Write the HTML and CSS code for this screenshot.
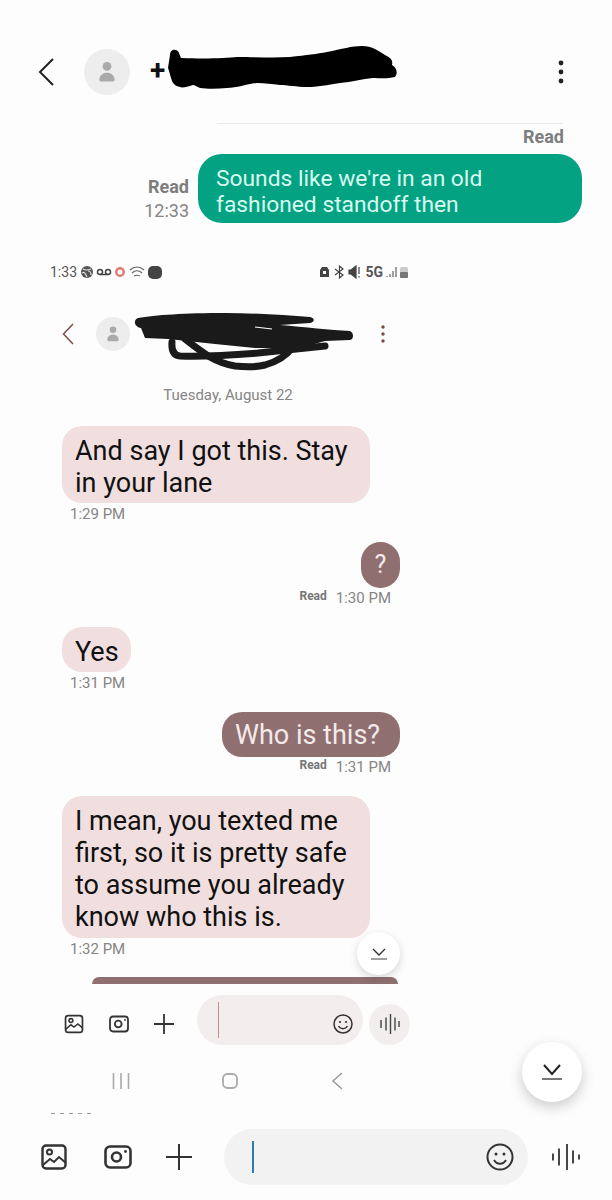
FILE: index.html
```html
<!DOCTYPE html>
<html lang="en">
<head>
    <meta charset="UTF-8">
    <meta name="viewport" content="width=device-width, initial-scale=1.0">
    <title>Messages</title>
    <link rel="stylesheet" href="styles.css">
</head>
<body>
    <div class="page">
        <header class="top-bar">
            <svg class="back-icon" width="16" height="28" viewBox="0 0 16 28"><path d="M15 1 2 14l13 13" fill="none" stroke="#222" stroke-width="2"/></svg>
            <div class="avatar">
                <svg width="16" height="22" viewBox="0 0 20 26"><circle cx="10" cy="6" r="5.500" fill="#aaa"/><path d="M3 25c-3 0-3-3-2-5 1-4 5-6 9-6s8 2 9 6c1 2 1 5-2 5z" fill="#aaa"/></svg>
            </div>
            <span class="contact-plus">+</span>
            <svg class="redact redact-top" width="232" height="45" viewBox="0 0 232 45"><path d="M3 10C3 4 10 3 12 8L14 13C40 14 60 13 70 12 90 12 105 13 123 12 140 10 150 9 160 7 175 4 185 1 195 1 205 1 212 6 218 10 224 13 226 15 225 20 230 23 231 28 228 32 220 34 212 33 206 33 195 34 185 37 173 38 160 40 150 42 140 42 130 42 120 40 113 40 105 39 98 38 90 38 80 39 70 43 60 43 50 44 40 44 33 43 30 42 28 40 26 40 20 42 15 43 13 42 8 41 6 38 5 36 3 30 2 25 1 23z" fill="#000"/></svg>
            <svg class="menu-dots" width="6" height="24" viewBox="0 0 6 24"><circle cx="3" cy="3" r="2.400"/><circle cx="3" cy="12" r="2.400"/><circle cx="3" cy="21" r="2.400"/></svg>
        </header>

        <div class="outer-thread">
            <div class="divider"></div>
            <div class="read-top">Read</div>
            <div class="outer-row">
                <div class="outer-meta"><b>Read</b><span>12:33</span></div>
                <div class="bubble-green">Sounds like we're in an old<br>fashioned standoff then</div>
            </div>
        </div>

        <section class="inner-screen">
            <div class="status-bar">
                <div class="status-left">
                    <span>1:33</span>
                    <svg width="66" height="14" viewBox="0 0 66 14">
                        <circle cx="7" cy="7" r="6" fill="#555"/><path d="M3 4c3 2 5 1 8 0M2 8c3-2 4 2 5 4M8 6c2 0 3 2 3 4" fill="none" stroke="#ddd" stroke-width="1.200"/>
                        <g fill="none" stroke="#444" stroke-width="1.500"><circle cx="20" cy="7" r="2.500"/><circle cx="28" cy="7" r="2.500"/><path d="M20 9.500h8"/></g>
                        <circle cx="40" cy="7" r="3.800" fill="none" stroke="#dc7a70" stroke-width="2.400"/>
                        <path d="M50 5c4-4 10-4 14 0M52 8c3-3 7-3 10 0M54 11c2-1 4-1 6 0" fill="none" stroke="#666" stroke-width="1.200"/>
                    </svg>
                    <span class="status-pill"></span>
                </div>
                <div class="status-right">
                    <svg width="44" height="14" viewBox="0 0 44 14">
                        <path d="M2 12V5l2-3h5l2 3v7z" fill="#444"/><rect x="5" y="6" width="3" height="3" fill="#fff"/>
                        <path d="M17 4l8 6-3.500 3V1L25 4l-8 6" fill="none" stroke="#444" stroke-width="1.200"/>
                        <path d="M31 5h2l5-4v12l-5-4h-2zM41 2v7M41 11v1.500" fill="#444" stroke="#444" stroke-width="1.200"/>
                    </svg>
                    <b>5G</b>
                    <svg width="22" height="14" viewBox="0 0 22 14">
                        <path d="M1 12v-1M4 12V9M7 12V6M10 12V2" stroke="#777" stroke-width="1.400"/>
                        <rect x="14" y="2" width="8" height="11" rx="1.500" fill="#ccc"/><rect x="14" y="7" width="8" height="6" rx="1" fill="#777"/>
                    </svg>
                </div>
            </div>

            <div class="inner-header">
                <svg class="inner-back" width="12" height="22" viewBox="0 0 12 22"><path d="M11 1 1.500 11l9.500 10" fill="none" stroke="#7b4a46" stroke-width="1.500"/></svg>
                <div class="inner-avatar">
                    <svg width="12" height="16" viewBox="0 0 20 26"><circle cx="10" cy="6" r="5.500" fill="#aaa"/><path d="M3 25c-3 0-3-3-2-5 1-4 5-6 9-6s8 2 9 6c1 2 1 5-2 5z" fill="#aaa"/></svg>
                </div>
                <svg class="redact redact-inner" width="240" height="70" viewBox="0 0 240 70">
                    <path d="M13 12C30 9 60 7 100 7 130 7 160 9 185 11 190 12 190 16 185 17L155 19C180 21 205 24 225 25 229 27 229 33 225 34L200 35C190 38 180 41 167 42L130 42 90 38 43 33 20 32 16 22C9 21 8 14 13 12z" fill="#1a1a1a"/>
                    <path d="M47 36q-1 13 8 14 28 1 78-3l67-7" fill="none" stroke="#1a1a1a" stroke-width="7" stroke-linecap="round"/>
                    <path d="M60 33q10 8 23 17 14 8 27 10 18 2 30-1 18-5 27-17" fill="none" stroke="#1a1a1a" stroke-width="7" stroke-linecap="round"/>
                    <path d="M130 21l17 2" stroke="#fff" stroke-width="1.200"/>
                </svg>
                <svg class="inner-dots" width="4" height="18" viewBox="0 0 4 18"><circle cx="2" cy="2" r="1.700" fill="#7b4a46"/><circle cx="2" cy="9" r="1.700" fill="#7b4a46"/><circle cx="2" cy="16" r="1.700" fill="#7b4a46"/></svg>
            </div>

            <div class="date-label">Tuesday, August 22</div>

            <div class="msg-in msg-first">And say I got this. Stay<br>in your lane</div>
            <div class="time-in">1:29 PM</div>

            <div class="msg-out msg-question">?</div>
            <div class="meta-out"><b>Read</b><span>1:30 PM</span></div>

            <div class="msg-in msg-yes">Yes</div>
            <div class="time-in">1:31 PM</div>

            <div class="msg-out msg-who">Who is this?</div>
            <div class="meta-out"><b>Read</b><span>1:31 PM</span></div>

            <div class="msg-in msg-long">I mean, you texted me<br>first, so it is pretty safe<br>to assume you already<br>know who this is.</div>
            <div class="time-in">1:32 PM</div>

            <div class="msg-cut"></div>

            <button class="scroll-btn scroll-inner">
                <svg width="16" height="12" viewBox="0 0 16 12"><path d="M2 1l6 6 6-6" fill="none" stroke="#333" stroke-width="1.400"/><path d="M0 11h16" stroke="#777" stroke-width="1.400"/></svg>
            </button>

            <div class="composer-inner">
                <svg width="20" height="20" viewBox="0 0 26 26" class="ic-gallery"><rect x="2" y="2" width="22" height="22" rx="3.500" fill="none" stroke="#333" stroke-width="2.200"/><circle cx="9" cy="8.500" r="2.500" fill="none" stroke="#333" stroke-width="2"/><path d="M2 20l7-6 4 3 5-4 6 5" fill="none" stroke="#333" stroke-width="2"/></svg>
                <svg width="22" height="18" viewBox="0 0 28 24" class="ic-camera"><rect x="2" y="2" width="24" height="20" rx="4" fill="none" stroke="#333" stroke-width="2.400"/><circle cx="13" cy="12" r="4.500" fill="none" stroke="#333" stroke-width="2.400"/><circle cx="22" cy="6.500" r="1.300" fill="#333"/></svg>
                <svg width="20" height="20" viewBox="0 0 20 20" class="ic-plus"><path d="M10 0v20M0 10h20" stroke="#333" stroke-width="1.800"/></svg>
                <div class="field-inner">
                    <span class="caret-inner"></span>
                    <svg class="smile-inner" width="20" height="20" viewBox="0 0 20 20"><circle cx="10" cy="10" r="9" fill="none" stroke="#333" stroke-width="1.500"/><circle cx="7" cy="8" r="1.100" fill="#333"/><circle cx="13" cy="8" r="1.100" fill="#333"/><path d="M5.500 12c2 3.500 7 3.500 9 0" fill="none" stroke="#333" stroke-width="1.500"/></svg>
                </div>
                <div class="voice-inner">
                    <svg width="20" height="20" viewBox="0 0 20 20"><path d="M1 6v8M6 3.500v13M10.500 0v20M15 3.500v13M19 7v6" stroke="#444" stroke-width="1.400"/></svg>
                </div>
            </div>

            <div class="nav-bar">
                <svg width="18" height="16" viewBox="0 0 18 16"><path d="M1.500 0v16M9 0v16M16.500 0v16" stroke="#aaa" stroke-width="1.600"/></svg>
                <svg width="16" height="16" viewBox="0 0 16 16"><rect x="1" y="1" width="14" height="14" rx="4.500" fill="none" stroke="#aaa" stroke-width="1.800"/></svg>
                <svg width="14" height="18" viewBox="0 0 14 18"><path d="M13 1 4 9l9 8" fill="none" stroke="#999" stroke-width="1.500"/></svg>
            </div>
        </section>

        <div class="cut-text"></div>

        <button class="scroll-btn scroll-outer">
            <svg width="20" height="16" viewBox="0 0 20 16"><path d="M2 1l8 9 8-9" fill="none" stroke="#222" stroke-width="2"/><path d="M0 15h20" stroke="#777" stroke-width="2"/></svg>
        </button>

        <footer class="composer">
            <svg width="26" height="26" viewBox="0 0 26 26"><rect x="1.500" y="1.500" width="23" height="23" rx="3.500" fill="none" stroke="#333" stroke-width="2.400"/><circle cx="8.500" cy="8" r="2.500" fill="none" stroke="#333" stroke-width="2"/><path d="M2 21l7-6 4 3 5-5 7 6" fill="none" stroke="#333" stroke-width="2"/></svg>
            <svg class="ic-camera-big" width="28" height="24" viewBox="0 0 28 24"><rect x="1.500" y="1.500" width="25" height="21" rx="4.500" fill="none" stroke="#333" stroke-width="2.600"/><circle cx="12.500" cy="12" r="4.500" fill="none" stroke="#333" stroke-width="2.600"/><circle cx="21.500" cy="6.500" r="1.400" fill="#333"/></svg>
            <svg class="ic-plus-big" width="26" height="26" viewBox="0 0 26 26"><path d="M13 0v26M0 13h26" stroke="#333" stroke-width="2"/></svg>
            <div class="field">
                <span class="caret"></span>
                <svg width="28" height="28" viewBox="0 0 28 28"><circle cx="14" cy="14" r="12.500" fill="none" stroke="#333" stroke-width="2"/><circle cx="10" cy="11" r="1.500" fill="#333"/><circle cx="18" cy="11" r="1.500" fill="#333"/><path d="M8 17c3 5 9 5 12 0" fill="none" stroke="#333" stroke-width="2"/></svg>
            </div>
            <svg class="ic-voice" width="28" height="26" viewBox="0 0 28 26"><path d="M1 9.500v7M7 4.500v17M15 0v26M21 6.500v13M27 10.500v5" stroke="#333" stroke-width="1.800"/></svg>
        </footer>
    </div>
</body>
</html>
```

FILE: styles.css
```css
* {
    margin: 0;
    padding: 0;
    box-sizing: border-box;
    font-family: Roboto, 'Liberation Sans', sans-serif;
}

body {
    background-color: #fdfdfd;
    color: #1a1a1a;
}

.page {
    position: relative;
    width: 612px;
    height: 1200px;
    padding-top: 49px;
    overflow: hidden;
}

/* outer conversation */
.top-bar {
    position: relative;
    display: flex;
    align-items: center;
    height: 46px;
    padding-left: 38px;
}

.avatar {
    display: flex;
    align-items: center;
    justify-content: center;
    width: 46px;
    height: 46px;
    margin-left: 30px;
    border-radius: 50%;
    background-color: #ededed;
}

.contact-plus {
    margin: 0 0 4px 20px;
    font-size: 28px;
    font-weight: 700;
    color: #111;
}

.menu-dots {
    margin-left: auto;
    margin-right: 48px;
    fill: #222;
}

.redact {
    position: absolute;
}

.redact-top {
    left: 167px;
    top: -4px;
}

.outer-thread {
    padding: 28px 30px 0 0;
}

.divider {
    width: 346px;
    height: 1px;
    margin-left: 217px;
    background-color: #ebebeb;
}

.read-top {
    margin: 1px 18px 0 0;
    text-align: right;
    font-size: 18px;
    line-height: 24px;
    font-weight: 700;
    color: #7d7d7d;
}

.outer-row {
    display: flex;
    justify-content: flex-end;
    align-items: flex-end;
    gap: 9px;
    margin-top: 5px;
}

.outer-meta {
    display: flex;
    flex-direction: column;
    align-items: flex-end;
    font-size: 18px;
    line-height: 24px;
    color: #858585;
}

.outer-meta b {
    color: #7d7d7d;
}

.bubble-green {
    width: 384px;
    height: 69px;
    padding: 12px 18px;
    border-radius: 24px;
    background-color: #02a283;
    color: #d8fbef;
    font-size: 22.800px;
    line-height: 26px;
}

/* screenshot inside the screenshot */
.inner-screen {
    position: relative;
    width: 420px;
    margin-top: 41px;
    padding-left: 62px;
}

.status-bar {
    display: flex;
    justify-content: space-between;
    align-items: center;
    height: 16px;
    width: 358px;
    margin-left: -12px;
    font-size: 14px;
    color: #555;
}

.status-left,
.status-right {
    display: flex;
    align-items: center;
    gap: 3px;
}

.status-pill {
    width: 14px;
    height: 13px;
    margin-left: -1px;
    border-radius: 5px;
    background-color: #444;
}

.status-right b {
    font-size: 14px;
    color: #555;
}

.inner-header {
    position: relative;
    display: flex;
    align-items: center;
    height: 36px;
    width: 338px;
    margin-top: 36px;
}

.inner-avatar {
    display: flex;
    align-items: center;
    justify-content: center;
    width: 34px;
    height: 34px;
    margin-left: 22px;
    border-radius: 50%;
    background-color: #ededed;
}

.redact-inner {
    left: 63px;
    top: -10px;
}

.inner-dots {
    margin-left: auto;
    margin-right: 15px;
}

.date-label {
    width: 332px;
    margin-top: 34px;
    text-align: center;
    font-size: 15px;
    line-height: 18px;
    color: #858585;
}

.msg-in,
.msg-out {
    font-size: 27px;
    line-height: 32px;
}

.msg-in {
    padding: 9px 13px 4px;
    border-radius: 20px;
    background-color: #f1dfdf;
    color: #111;
}

.msg-first {
    width: 308px;
    margin-top: 22px;
}

.msg-yes {
    width: 69px;
    height: 45px;
    margin-top: 20px;
}

.msg-long {
    width: 308px;
    height: 142px;
    margin-top: 20px;
}

.time-in {
    height: 19px;
    margin-left: 8px;
    padding-top: 4px;
    font-size: 15px;
    line-height: 15px;
    color: #858585;
}

.msg-out {
    margin-left: auto;
    margin-right: 20px;
    border-radius: 20px;
    background-color: #8f6f70;
    color: #f3eaea;
}

.msg-question {
    width: 39px;
    height: 46px;
    margin-top: 20px;
    text-align: center;
    font-size: 25px;
    line-height: 46px;
}

.msg-who {
    width: 178px;
    height: 45px;
    margin-top: 21px;
    padding-left: 13px;
    line-height: 46px;
}

.meta-out {
    display: flex;
    justify-content: flex-end;
    align-items: center;
    gap: 9px;
    margin-right: 29px;
    height: 19px;
    font-size: 15px;
    color: #858585;
}

.meta-out b {
    margin-bottom: 3px;
    font-size: 12px;
    color: #767676;
}

.msg-cut {
    width: 306px;
    height: 7px;
    margin: 20px 0 0 30px;
    border-radius: 20px 20px 0 0;
    background-color: #8f6f70;
}

.scroll-btn {
    position: absolute;
    display: flex;
    align-items: center;
    justify-content: center;
    border: none;
    border-radius: 50%;
    background-color: #fff;
}

.scroll-inner {
    left: 357px;
    top: 668px;
    width: 43px;
    height: 43px;
    box-shadow: 0 3px 8px rgba(0, 0, 0, 0.16);
}

.scroll-outer {
    left: 522px;
    top: 1042px;
    width: 60px;
    height: 60px;
    box-shadow: 0 5px 14px rgba(0, 0, 0, 0.2);
}

.composer-inner {
    display: flex;
    align-items: center;
    height: 50px;
    margin-top: 11px;
    padding-top: 8px;
}

.ic-gallery {
    margin-left: 2px;
}

.ic-camera {
    margin-left: 24px;
}

.ic-plus {
    margin-left: 24px;
}

.field-inner {
    display: flex;
    align-items: center;
    justify-content: space-between;
    width: 166px;
    height: 50px;
    margin: -8px 0 0 23px;
    padding: 0 10px 0 21px;
    border-radius: 25px;
    background-color: #f2eeee;
}

.caret-inner {
    width: 1px;
    height: 36px;
    background-color: #c08f88;
}

.smile-inner {
    margin-top: 8px;
}

.voice-inner {
    display: flex;
    align-items: center;
    justify-content: center;
    width: 41px;
    height: 41px;
    margin-left: 6px;
    border-radius: 50%;
    background-color: #f2eeee;
}

.nav-bar {
    display: flex;
    align-items: center;
    justify-content: space-between;
    width: 231px;
    height: 20px;
    margin: 26px 0 0 50px;
}

.cut-text {
    position: absolute;
    left: 51px;
    top: 1113px;
    width: 41px;
    height: 1px;
    background: repeating-linear-gradient(90deg, #999 0 4px, transparent 4px 9px);
}

.composer {
    position: absolute;
    left: 41px;
    top: 1129px;
    display: flex;
    align-items: center;
    height: 56px;
}

.ic-camera-big {
    margin-left: 37px;
}

.ic-plus-big {
    margin-left: 34px;
}

.field {
    display: flex;
    align-items: center;
    justify-content: space-between;
    width: 304px;
    height: 56px;
    margin-left: 32px;
    padding: 0 14px 0 28px;
    border-radius: 28px;
    background-color: #f2f2f2;
}

.caret {
    width: 2px;
    height: 32px;
    background-color: #2b7db0;
}

.ic-voice {
    margin-left: 24px;
}
```
